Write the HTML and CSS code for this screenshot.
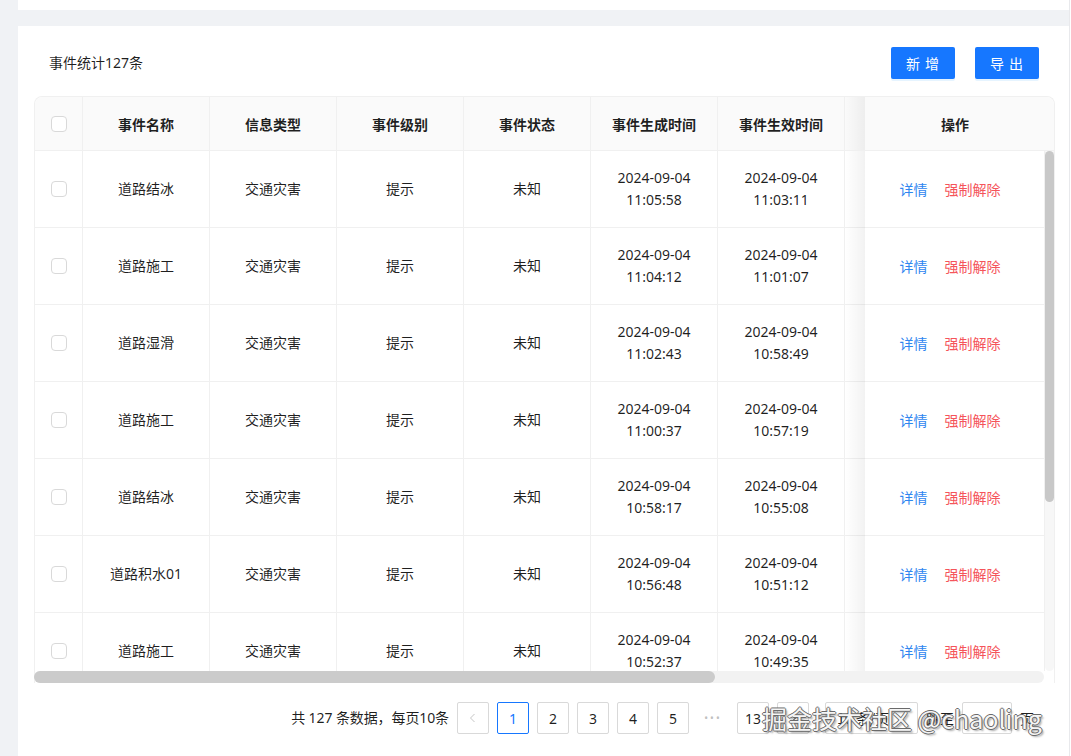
FILE: index.html
```html
<!DOCTYPE html>
<html lang="zh-CN">
<head>
<meta charset="utf-8">
<title>事件统计</title>
<link rel="stylesheet" href="styles.css">
</head>
<body>
<div class="layout">
  <div class="topbar"></div>
  <div class="card">
    <div class="toolbar">
      <div class="title">事件统计127条</div>
      <div class="actions">
        <button class="btn">新 增</button>
        <button class="btn">导 出</button>
      </div>
    </div>

    <div class="table">
      <div class="thead">
        <div class="head-scroll">
          <div class="th cb"><span class="checkbox"></span></div>
          <div class="th">事件名称</div>
          <div class="th">信息类型</div>
          <div class="th">事件级别</div>
          <div class="th">事件状态</div>
          <div class="th">事件生成时间</div>
          <div class="th">事件生效时间</div>
          <div class="th"></div>
        </div>
        <div class="th fixed">操作</div>
        <div class="th gutter"></div>
      </div>

      <div class="tbody">
        <div class="body-scroll">
          <div class="tr"><div class="td cb"><span class="checkbox"></span></div><div class="td">道路结冰</div><div class="td">交通灾害</div><div class="td">提示</div><div class="td">未知</div><div class="td">2024-09-04<br>11:05:58</div><div class="td">2024-09-04<br>11:03:11</div><div class="td"></div></div>
          <div class="tr"><div class="td cb"><span class="checkbox"></span></div><div class="td">道路施工</div><div class="td">交通灾害</div><div class="td">提示</div><div class="td">未知</div><div class="td">2024-09-04<br>11:04:12</div><div class="td">2024-09-04<br>11:01:07</div><div class="td"></div></div>
          <div class="tr"><div class="td cb"><span class="checkbox"></span></div><div class="td">道路湿滑</div><div class="td">交通灾害</div><div class="td">提示</div><div class="td">未知</div><div class="td">2024-09-04<br>11:02:43</div><div class="td">2024-09-04<br>10:58:49</div><div class="td"></div></div>
          <div class="tr"><div class="td cb"><span class="checkbox"></span></div><div class="td">道路施工</div><div class="td">交通灾害</div><div class="td">提示</div><div class="td">未知</div><div class="td">2024-09-04<br>11:00:37</div><div class="td">2024-09-04<br>10:57:19</div><div class="td"></div></div>
          <div class="tr"><div class="td cb"><span class="checkbox"></span></div><div class="td">道路结冰</div><div class="td">交通灾害</div><div class="td">提示</div><div class="td">未知</div><div class="td">2024-09-04<br>10:58:17</div><div class="td">2024-09-04<br>10:55:08</div><div class="td"></div></div>
          <div class="tr"><div class="td cb"><span class="checkbox"></span></div><div class="td">道路积水01</div><div class="td">交通灾害</div><div class="td">提示</div><div class="td">未知</div><div class="td">2024-09-04<br>10:56:48</div><div class="td">2024-09-04<br>10:51:12</div><div class="td"></div></div>
          <div class="tr"><div class="td cb"><span class="checkbox"></span></div><div class="td">道路施工</div><div class="td">交通灾害</div><div class="td">提示</div><div class="td">未知</div><div class="td">2024-09-04<br>10:52:37</div><div class="td">2024-09-04<br>10:49:35</div><div class="td"></div></div>
        </div>
        <div class="fixed-col">
          <div class="fr"><a class="link">详情</a><a class="link danger">强制解除</a></div>
          <div class="fr"><a class="link">详情</a><a class="link danger">强制解除</a></div>
          <div class="fr"><a class="link">详情</a><a class="link danger">强制解除</a></div>
          <div class="fr"><a class="link">详情</a><a class="link danger">强制解除</a></div>
          <div class="fr"><a class="link">详情</a><a class="link danger">强制解除</a></div>
          <div class="fr"><a class="link">详情</a><a class="link danger">强制解除</a></div>
          <div class="fr"><a class="link">详情</a><a class="link danger">强制解除</a></div>
        </div>
        <div class="vscroll"><div class="vthumb"></div></div>
      </div>
      <div class="hscroll"><div class="hthumb"></div></div>
    </div>

    <div class="pagination">
      <span class="total">共 127 条数据，每页10条</span>
      <span class="pg disabled"><svg width="12" height="12" viewBox="0 0 12 12"><path d="M7.5 2 L3.5 6 L7.5 10" fill="none" stroke="currentColor" stroke-width="1"/></svg></span>
      <span class="pg active">1</span>
      <span class="pg">2</span>
      <span class="pg">3</span>
      <span class="pg">4</span>
      <span class="pg">5</span>
      <span class="pg jump">•••</span>
      <span class="pg">13</span>
      <span class="pg"><svg width="12" height="12" viewBox="0 0 12 12"><path d="M4.5 2 L8.5 6 L4.5 10" fill="none" stroke="currentColor" stroke-width="1"/></svg></span>
      <span class="size-select">10 条/页<svg width="10" height="10" viewBox="0 0 10 10"><path d="M1.5 3.5 L5 7 L8.5 3.5" fill="none" stroke="#bfbfbf" stroke-width="1"/></svg></span>
      <span class="jumper">跳至<span class="jump-input"></span>页</span>
      <div class="watermark">掘金技术社区 @chaoling</div>
    </div>
  </div>
</div>
</body>
</html>
```

FILE: styles.css
```css
* { box-sizing: border-box; }

html, body {
  margin: 0;
  padding: 0;
  background: #ffffff;
  font-family: "Noto Sans", "Noto Sans CJK SC", sans-serif;
  font-size: 14px;
  color: rgba(0, 0, 0, 0.88);
}

.layout {
  width: 1070px;
  height: 756px;
  overflow: hidden;
  background: #f0f2f5;
  padding-left: 18px;
  border-right: 1px solid #e8e9ec;
}

.topbar {
  height: 10px;
  background: #ffffff;
}

.card {
  margin-top: 16px;
  background: #ffffff;
  padding: 21px 14px 40px 16px;
  height: 760px;
}

.toolbar {
  display: flex;
  align-items: center;
  justify-content: space-between;
  height: 32px;
  margin-bottom: 17px;
  padding: 0 16px 0 15px;
}

.title {
  font-size: 14px;
  line-height: 22px;
}

.actions {
  display: flex;
  gap: 20px;
}

.btn {
  width: 64px;
  height: 32px;
  border: none;
  border-radius: 2px;
  background: #1677ff;
  color: #ffffff;
  font-family: "Noto Sans CJK SC", sans-serif;
  font-size: 14px;
  letter-spacing: 1px;
  padding: 0;
  box-shadow: 0 2px 0 rgba(5, 145, 255, 0.1);
}

.table {
  border: 1px solid #f0f0f0;
  border-bottom: none;
  border-radius: 8px 8px 0 0;
  width: 1021px;
}

.thead {
  display: flex;
  height: 54px;
  background: #fafafa;
  border-bottom: 1px solid #f0f0f0;
  border-radius: 8px 8px 0 0;
  overflow: hidden;
}

.head-scroll {
  display: flex;
  width: 830px;
  flex: 0 0 830px;
  overflow: hidden;
}

.th {
  flex: 0 0 127px;
  display: flex;
  align-items: center;
  justify-content: center;
  font-weight: 700;
  font-family: "Noto Sans CJK SC", sans-serif;
  border-right: 1px solid #f0f0f0;
  line-height: 22px;
}

.th.cb, .td.cb {
  flex: 0 0 48px;
}

.th.fixed {
  flex: 0 0 180px;
  border-right: none;
  position: relative;
  background: #fafafa;
}

.th.fixed::before,
.fixed-col::before {
  content: "";
  position: absolute;
  top: 0;
  bottom: 0;
  left: -20px;
  width: 20px;
  background: linear-gradient(to left, rgba(0, 0, 0, 0.05), rgba(0, 0, 0, 0));
}

.th.gutter {
  flex: 1 1 auto;
  border-right: none;
}

.checkbox {
  display: inline-block;
  width: 16px;
  height: 16px;
  border: 1px solid #d9d9d9;
  border-radius: 4px;
  background: #ffffff;
}

.tbody {
  display: flex;
  height: 520px;
  overflow: hidden;
}

.body-scroll {
  flex: 0 0 830px;
  width: 830px;
  overflow: hidden;
}

.tr {
  display: flex;
  height: 77px;
  border-bottom: 1px solid #f0f0f0;
}

.td {
  flex: 0 0 127px;
  display: flex;
  align-items: center;
  justify-content: center;
  text-align: center;
  line-height: 22px;
  border-right: 1px solid #f0f0f0;
}

.fixed-col {
  flex: 0 0 180px;
  position: relative;
  background: #ffffff;
  border-right: 1px solid #f0f0f0;
}

.fr {
  height: 77px;
  border-bottom: 1px solid #f0f0f0;
  display: flex;
  align-items: center;
  justify-content: center;
  gap: 17px;
  padding-right: 9px;
  line-height: 22px;
}

.link {
  color: #2f86f0;
  font-family: "Noto Sans CJK SC", sans-serif;
}

.link.danger {
  color: #f5545a;
}

.vscroll {
  flex: 1 1 auto;
  background: #f7f7f7;
  border-radius: 0 0 5px 5px;
  padding: 0;
}

.vthumb {
  height: 351px;
  width: 100%;
  background: #c8c8c8;
  border-radius: 5px;
}

.hscroll {
  height: 12px;
  width: 1010px;
  margin-left: -1px;
  background: #f2f2f2;
  border-radius: 6px;
}

.hthumb {
  width: 681px;
  height: 12px;
  background: #cbcbcb;
  border-radius: 6px;
}

.pagination {
  position: relative;
  display: flex;
  align-items: center;
  justify-content: flex-end;
  gap: 8px;
  margin-top: 19px;
  padding-right: 21px;
  height: 32px;
}

.total {
  font-family: "Noto Sans", "Noto Sans CJK SC", sans-serif;
  line-height: 32px;
  letter-spacing: -0.1px;
}

.pg {
  width: 32px;
  height: 32px;
  display: flex;
  align-items: center;
  justify-content: center;
  border: 1px solid #d9d9d9;
  border-radius: 2px;
  background: #ffffff;
  color: rgba(0, 0, 0, 0.88);
}

.pg.active {
  border-color: #1677ff;
  color: #1677ff;
}

.pg.disabled {
  color: #c6c6c6;
}

.pg.jump {
  border: none;
  color: #c0c0c0;
  font-size: 10px;
  letter-spacing: 2px;
}

.size-select {
  margin-left: 8px;
  width: 93px;
  height: 32px;
  border: 1px solid #d9d9d9;
  border-radius: 2px;
  display: flex;
  align-items: center;
  justify-content: space-between;
  padding: 0 10px 0 11px;
  font-family: "Noto Sans CJK SC", sans-serif;
}

.jumper {
  display: flex;
  align-items: center;
  gap: 8px;
  font-family: "Noto Sans CJK SC", sans-serif;
}

.jump-input {
  display: inline-block;
  width: 50px;
  height: 32px;
  border: 1px solid #d9d9d9;
  border-radius: 2px;
}

.watermark {
  position: absolute;
  left: 728px;
  top: 0;
  line-height: 32px;
  font-size: 25px;
  font-family: "Noto Sans CJK SC", sans-serif;
  color: #f5f5f5;
  white-space: nowrap;
  text-shadow: -1px 0 0 #6a6a6a, 1px 0 0 #6a6a6a, 0 -1px 0 #6a6a6a, 0 1px 0 #6a6a6a, 2px 2px 2px rgba(0, 0, 0, 0.35);
}
```
